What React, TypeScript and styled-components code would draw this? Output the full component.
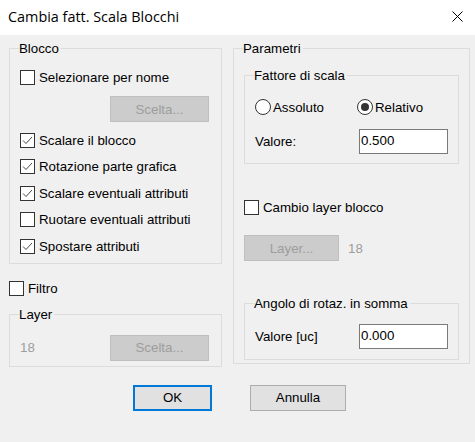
import * as React from "react";
import styled, { createGlobalStyle } from "styled-components";

const GlobalStyle = createGlobalStyle`
  html, body {
    margin: 0;
    padding: 0;
    background: #f0f0f0;
  }
  body {
    font-family: "Liberation Sans", Arial, sans-serif;
    font-size: 13.3px;
    color: #000;
  }
`;

const Window = styled.div`
  width: 475px;
  height: 442px;
  background: #f0f0f0;
  display: flex;
  flex-direction: column;
  overflow: hidden;
`;

const TitleBar = styled.div`
  height: 35px;
  background: #fff;
  display: flex;
  align-items: center;
  justify-content: space-between;
  padding: 0 12px 0 8px;
  box-sizing: border-box;
  flex-shrink: 0;
`;

const Title = styled.span`
  font-family: "Open Sans", "Noto Sans", sans-serif;
  font-size: 14.4px;
  margin-top: -2px;
`;

const CloseIcon = styled.svg`
  width: 11px;
  height: 11px;
  margin-top: -2px;
`;

const Body = styled.div`
  display: grid;
  grid-template-columns: 213px 237px;
  column-gap: 11px;
  padding: 6px 0 0 9px;
`;

const Column = styled.div`
  display: flex;
  flex-direction: column;
`;

const Group = styled.fieldset<{ $top?: number; $pt: number; $pr: number; $pb: number }>`
  margin: ${(p) => p.$top ?? 0}px 0 0 0;
  padding: ${(p) => p.$pt}px ${(p) => p.$pr}px ${(p) => p.$pb}px 10px;
  border: 1px solid #dcdcdc;
  min-width: 0;
  display: flex;
  flex-direction: column;
`;

const Legend = styled.legend`
  padding: 0 2px 0 0;
  margin-left: -1px;
  line-height: 15px;
`;

const CheckRow = styled.label<{ $h: number; $top?: number }>`
  display: flex;
  align-items: center;
  height: ${(p) => p.$h}px;
  margin-top: ${(p) => p.$top ?? 0}px;
  gap: 4px;
`;

const Box = styled.span`
  width: 15px;
  height: 15px;
  box-sizing: border-box;
  border: 1px solid #333;
  background: #fff;
  display: flex;
  align-items: center;
  justify-content: center;
  flex-shrink: 0;
`;

const RadioRow = styled.div`
  display: flex;
  align-items: center;
  height: 24px;
`;

const RadioItem = styled.label<{ $w?: number }>`
  display: flex;
  align-items: center;
  gap: 2px;
  width: ${(p) => (p.$w ? `${p.$w}px` : "auto")};
`;

const RadioCircle = styled.span<{ $on?: boolean }>`
  width: 16px;
  height: 16px;
  box-sizing: border-box;
  border: 1px solid #333;
  border-radius: 50%;
  background: #fff;
  display: flex;
  align-items: center;
  justify-content: center;
  &::after {
    content: "";
    display: ${(p) => (p.$on ? "block" : "none")};
    width: 8px;
    height: 8px;
    border-radius: 50%;
    background: #333;
  }
`;

const FieldRow = styled.div<{ $top?: number }>`
  display: flex;
  align-items: center;
  margin-top: ${(p) => p.$top ?? 0}px;
`;

const FieldLabel = styled.span`
  width: 104px;
  flex-shrink: 0;
`;

const TextBox = styled.input`
  width: 89px;
  height: 25px;
  box-sizing: border-box;
  border: 1px solid #7a7a7a;
  background: #fff;
  padding: 0 0 2px 1px;
  margin: 0;
  font-family: "Liberation Sans", Arial, sans-serif;
  font-size: 13.3px;
  color: #000;
  outline: none;
`;

const ButtonRow = styled.div<{ $top?: number; $align?: string }>`
  display: flex;
  align-items: center;
  justify-content: ${(p) => p.$align ?? "flex-start"};
  margin-top: ${(p) => p.$top ?? 0}px;
  gap: 9px;
`;

const DisabledButton = styled.div<{ $w: number }>`
  width: ${(p) => p.$w}px;
  height: 26px;
  box-sizing: border-box;
  background: #cccccc;
  border: 1px solid #bfbfbf;
  color: #9d9d9d;
  display: flex;
  align-items: center;
  justify-content: center;
`;

const GrayText = styled.span`
  color: #9d9d9d;
`;

const OptionList = styled.div`
  margin-top: 5px;
`;

const Footer = styled.div`
  display: flex;
  gap: 38px;
  padding-left: 133px;
  margin-top: 18px;
`;

const DialogButton = styled.button<{ $w: number; $default?: boolean }>`
  width: ${(p) => p.$w}px;
  height: 26px;
  box-sizing: border-box;
  background: #e1e1e1;
  border: ${(p) => (p.$default ? "2px solid #0078d7" : "1px solid #adadad")};
  font-family: "Liberation Sans", Arial, sans-serif;
  font-size: 13.3px;
  color: #000;
  padding: 0;
  margin: 0;
`;

const Check = ({ on }: { on?: boolean }) => (
  <Box>
    {on && (
      <svg width="13" height="13" viewBox="0 0 13 13">
        <path d="M2 6.5 L5 9.5 L11 3" fill="none" stroke="#333" strokeWidth="0.9" />
      </svg>
    )}
  </Box>
);

const blockOptions = [
  { label: "Scalare il blocco", on: true },
  { label: "Rotazione parte grafica", on: true },
  { label: "Scalare eventuali attributi", on: true },
  { label: "Ruotare eventuali attributi", on: false },
  { label: "Spostare attributi", on: true },
];

export default function App() {
  return (
    <Window>
      <GlobalStyle />
      <TitleBar>
        <Title>Cambia fatt. Scala Blocchi</Title>
        <CloseIcon viewBox="0 0 11 11">
          <path d="M0.5 0.5 L10.5 10.5 M10.5 0.5 L0.5 10.5" stroke="#000" strokeWidth="1" />
        </CloseIcon>
      </TitleBar>

      <Body>
        <Column>
          <Group $pt={8} $pr={12} $pb={3}>
            <Legend>Blocco</Legend>
            <CheckRow $h={26}>
              <Check />
              Selezionare per nome
            </CheckRow>
            <ButtonRow $top={6} $align="flex-end">
              <DisabledButton $w={99}>Scelta...</DisabledButton>
            </ButtonRow>
            <OptionList>
              {blockOptions.map((o) => (
                <CheckRow key={o.label} $h={26.5}>
                  <Check on={o.on} />
                  {o.label}
                </CheckRow>
              ))}
            </OptionList>
          </Group>

          <CheckRow $h={26} $top={12}>
            <Check />
            Filtro
          </CheckRow>

          <Group $top={5} $pt={13} $pr={12} $pb={5}>
            <Legend>Layer</Legend>
            <ButtonRow $align="space-between">
              <GrayText>18</GrayText>
              <DisabledButton $w={99}>Scelta...</DisabledButton>
            </ButtonRow>
          </Group>
        </Column>

        <Column>
          <Group $pt={0} $pr={10} $pb={3}>
            <Legend>Parametri</Legend>
            <Group $top={12} $pt={12} $pr={11} $pb={9}>
              <Legend>Fattore di scala</Legend>
              <RadioRow>
                <RadioItem $w={102}>
                  <RadioCircle />
                  Assoluto
                </RadioItem>
                <RadioItem>
                  <RadioCircle $on />
                  Relativo
                </RadioItem>
              </RadioRow>
              <FieldRow $top={10}>
                <FieldLabel>Valore:</FieldLabel>
                <TextBox readOnly value="0.500" />
              </FieldRow>
            </Group>

            <CheckRow $h={24} $top={31}>
              <Check />
              Cambio layer blocco
            </CheckRow>

            <ButtonRow $top={16}>
              <DisabledButton $w={95}>Layer...</DisabledButton>
              <GrayText>18</GrayText>
            </ButtonRow>

            <Group $top={35} $pt={13} $pr={11} $pb={10}>
              <Legend>Angolo di rotaz. in somma</Legend>
              <FieldRow>
                <FieldLabel>Valore [uc]</FieldLabel>
                <TextBox readOnly value="0.000" />
              </FieldRow>
            </Group>
          </Group>
        </Column>
      </Body>

      <Footer>
        <DialogButton $w={79} $default>
          OK
        </DialogButton>
        <DialogButton $w={96}>Annulla</DialogButton>
      </Footer>
    </Window>
  );
}
